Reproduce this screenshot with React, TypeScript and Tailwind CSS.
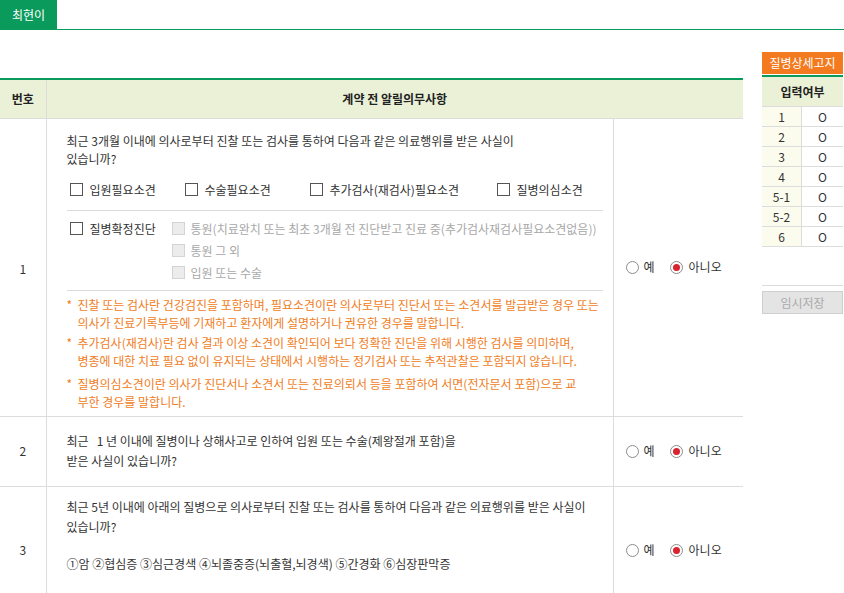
import React from 'react';

function Box({ disabled = false }: { disabled?: boolean }) {
  return (
    <span
      className={`inline-block w-[13px] h-[13px] shrink-0 border ${
        disabled ? 'border-[#d4d4d4] bg-[#ececec]' : 'border-[#555] bg-white'
      }`}
    />
  );
}

function Radio({ checked = false }: { checked?: boolean }) {
  return (
    <span className="inline-flex items-center justify-center w-[13px] h-[13px] rounded-full border border-[#8c8c8c] bg-white shrink-0">
      {checked && <span className="w-[7px] h-[7px] rounded-full bg-[#d9232e]" />}
    </span>
  );
}

function YesNo() {
  return (
    <div className="flex items-center pl-[12px]">
      <Radio />
      <span className="ml-[5px]">예</span>
      <span className="ml-[15px] flex items-center">
        <Radio checked />
        <span className="ml-[6px]">아니오</span>
      </span>
    </div>
  );
}

const notes = [
  ['진찰 또는 검사란 건강검진을 포함하며, 필요소견이란 의사로부터 진단서 또는 소견서를 발급받은 경우 또는', ' 의사가 진료기록부등에 기재하고 환자에게 설명하거나 권유한 경우를 말합니다.'],
  ['추가검사(재검사)란 검사 결과 이상 소견이 확인되어 보다 정확한 진단을 위해 시행한 검사를 의미하며,', '병종에 대한 치료 필요 없이 유지되는 상태에서 시행하는 정기검사 또는 추적관찰은 포함되지 않습니다.'],
  ['질병의심소견이란 의사가 진단서나 소견서 또는 진료의뢰서 등을 포함하여 서면(전자문서 포함)으로 교', '부한 경우를 말합니다.'],
];

const status = ['1', '2', '3', '4', '5-1', '5-2', '6'];

export default function App() {
  return (
    <div className="w-[844px] h-[593px] overflow-hidden bg-white text-[12px] text-[#333] font-['Noto_Sans_CJK_KR','Malgun_Gothic',sans-serif]">
      {/* tab bar */}
      <div className="flex border-b border-[#0a9a5c] h-[30px]">
        <div className="w-[57px] h-[29px] bg-[#0a9a5c] text-white flex items-center justify-center">최현이</div>
      </div>

      <div className="flex">
        {/* main table */}
        <div className="w-[743px] mt-[48px]">
          <table className="w-[743px] border-collapse table-fixed">
            <colgroup>
              <col className="w-[46px]" />
              <col className="w-[567px]" />
              <col className="w-[130px]" />
            </colgroup>
            <thead>
              <tr className="bg-[#ebf1d7] border-t-2 border-[#0a9a5c] border-b border-b-[#dcdcdc] h-[39px]">
                <th className="font-bold text-[#222] border-r border-[#dcdcdc]">번호</th>
                <th colSpan={2} className="font-bold text-[#222]">계약 전 알릴의무사항</th>
              </tr>
            </thead>
            <tbody>
              <tr className="border-b border-[#dcdcdc]">
                <td className="text-center border-r border-[#dcdcdc] align-middle pt-[4px]">1</td>
                <td className="border-r border-[#dcdcdc] pl-[20px] pr-[10px] pt-[13px] pb-[5px] align-top">
                  <p className="leading-[18px] whitespace-nowrap">
                    최근 3개월 이내에 의사로부터 진찰 또는 검사를 통하여 다음과 같은 의료행위를 받은 사실이
                    <br />
                    있습니까?
                  </p>
                  <div className="flex items-center h-[18px] mt-[13px] pl-[3px] whitespace-nowrap">
                    <label className="flex items-center gap-[7px] w-[115px]"><Box />입원필요소견</label>
                    <label className="flex items-center gap-[7px] w-[125px]"><Box />수술필요소견</label>
                    <label className="flex items-center gap-[7px] w-[187px]"><Box />추가검사(재검사)필요소견</label>
                    <label className="flex items-center gap-[7px]"><Box />질병의심소견</label>
                  </div>
                  <div className="border-b border-[#dcdcdc] mt-[11px]" />
                  <div className="flex pl-[3px] pt-[7px] pb-[6px] whitespace-nowrap">
                    <label className="flex items-center gap-[7px] w-[102px] h-[22px] self-start"><Box />질병확정진단</label>
                    <div className="flex flex-col text-[#a8a8a8]">
                      <label className="flex items-center gap-[6px] h-[22px]"><Box disabled />통원(치료완치 또는 최초 3개월 전 진단받고 진료 중(추가검사재검사필요소견없음))</label>
                      <label className="flex items-center gap-[6px] h-[22px]"><Box disabled />통원 그 외</label>
                      <label className="flex items-center gap-[6px] h-[22px]"><Box disabled />입원 또는 수술</label>
                    </div>
                  </div>
                  <div className="border-b border-[#dcdcdc]" />
                  <div className="pt-[5px] text-[#f07d24] leading-[18px] whitespace-nowrap">
                    {notes.map((n, i) => (
                      <div key={i} className={`flex ${i === 1 ? 'mt-[2px]' : i === 2 ? 'mt-[5px]' : ''}`}>
                        <span className="w-[11px] shrink-0">*</span>
                        <span>
                          {n[0]}
                          <br />
                          {n[1]}
                        </span>
                      </div>
                    ))}
                  </div>
                </td>
                <td className="align-middle">
                  <YesNo />
                </td>
              </tr>

              <tr className="border-b border-[#dcdcdc] h-[70px]">
                <td className="text-center border-r border-[#dcdcdc] align-middle">2</td>
                <td className="border-r border-[#dcdcdc] pl-[20px] align-middle">
                  <p className="leading-[20px] whitespace-nowrap">
                    최근&nbsp;&nbsp;&nbsp;1 년 이내에 질병이나 상해사고로 인하여 입원 또는 수술(제왕절개 포함)을
                    <br />
                    받은 사실이 있습니까?
                  </p>
                </td>
                <td className="align-middle">
                  <YesNo />
                </td>
              </tr>

              <tr className="h-[128px]">
                <td className="text-center border-r border-[#dcdcdc] align-middle">3</td>
                <td className="border-r border-[#dcdcdc] pl-[20px] pt-[10px] align-top">
                  <p className="leading-[20px] whitespace-nowrap">
                    최근 5년 이내에 아래의 질병으로 의사로부터 진찰 또는 검사를 통하여 다음과 같은 의료행위를 받은 사실이
                    <br />
                    있습니까?
                  </p>
                  <p className="leading-[20px] mt-[17px] whitespace-nowrap">
                    ①암 ②협심증 ③심근경색 ④뇌졸중증(뇌출혈,뇌경색) ⑤간경화 ⑥심장판막증
                  </p>
                </td>
                <td className="align-middle">
                  <YesNo />
                </td>
              </tr>
            </tbody>
          </table>
        </div>

        {/* side panel */}
        <div className="w-[81px] ml-[19px] mt-[22px] flex flex-col">
          <button className="h-[22px] bg-[#f37a1f] text-white">질병상세고지</button>
          <div className="mt-[1px] border-t-2 border-[#0a9a5c]">
            <div className="h-[30px] bg-[#ebf1d7] flex items-center justify-center font-bold text-[#222] border-b border-[#dcdcdc]">입력여부</div>
            {status.map((s) => (
              <div key={s} className="flex h-[20px] border-b border-[#dcdcdc]">
                <div className="w-[40px] bg-[#fcfcee] border-r border-[#dcdcdc] flex items-center justify-center">{s}</div>
                <div className="flex-1 flex items-center justify-center">O</div>
              </div>
            ))}
          </div>
          <div className="mt-[38px] border-t border-[#dcdcdc]" />
          <button className="mt-[5px] h-[23px] bg-[#e4e4e4] border border-[#cfcfcf] text-[#aaa]">임시저장</button>
        </div>
      </div>
    </div>
  );
}
